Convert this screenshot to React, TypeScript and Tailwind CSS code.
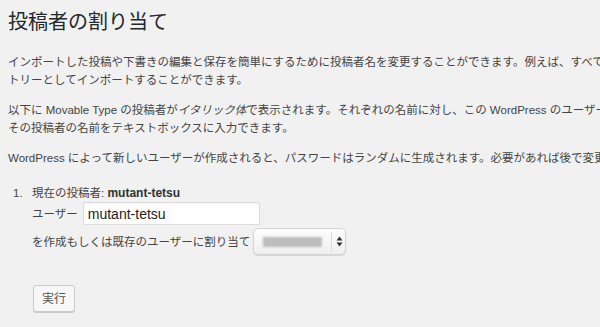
const font = { fontFamily: '"Liberation Sans", "Noto Sans CJK JP", sans-serif' };

function SelectBox() {
  return (
    <div className="relative flex h-[27px] w-[93px] items-center rounded-[5px] border border-[#d4d4d4] bg-gradient-to-b from-[#fdfdfd] to-[#efefef] shadow-[0_1px_1px_rgba(0,0,0,0.12)]">
      <div className="ml-[9px] h-[10px] w-[59px] bg-[#bdbdbd] blur-[1px]" />
      <div className="ml-[9px] h-[20px] w-px bg-[#dcdcdc]" />
      <svg className="ml-[4px]" width="7" height="11" viewBox="0 0 7 11">
        <path d="M3.5 0.5 L6.5 4.5 L0.5 4.5 Z" fill="#333" />
        <path d="M3.5 10.5 L6.5 6.5 L0.5 6.5 Z" fill="#333" />
      </svg>
    </div>
  );
}

export default function App() {
  return (
    <div
      className="h-[327px] w-[600px] overflow-hidden bg-[#f1f1f1] pl-[8px] pt-[8px] text-[#444]"
      style={font}
    >
      <h2 className="whitespace-nowrap text-[20px] font-normal leading-[28px] text-[#23282d]">
        投稿者の割り当て
      </h2>

      <div className="mt-[17px] flex flex-col gap-[12px] whitespace-nowrap text-[11.5px] leading-[18px]">
        <p>
          インポートした投稿や下書きの編集と保存を簡単にするために投稿者名を変更することができます。例えば、すべてのエントリーを admin のエン
          <br />
          トリーとしてインポートすることができます。
        </p>
        <p>
          以下に Movable Type の投稿者が<em className="italic">イタリック体</em>で表示されます。それぞれの名前に対し、この WordPress のユーザーを選択するか、
          <br />
          その投稿者の名前をテキストボックスに入力できます。
        </p>
        <p>WordPress によって新しいユーザーが作成されると、パスワードはランダムに生成されます。必要があれば後で変更してください。</p>
      </div>

      <ol className="mt-[17px] text-[11.5px] leading-[18px]">
        <li className="flex">
          <span className="w-[24px] pl-[5px]">1.</span>
          <div className="flex flex-col">
            <div className="whitespace-nowrap">
              現在の投稿者: <strong className="text-[12px] font-bold text-[#333]">mutant-tetsu</strong>
            </div>
            <label className="flex items-center gap-[5px] whitespace-nowrap">
              ユーザー
              <input
                defaultValue="mutant-tetsu"
                className="h-[23px] w-[177px] border border-[#dcdcdc] bg-white px-[4px] text-[14px] text-[#222] shadow-[inset_0_1px_2px_rgba(0,0,0,0.05)] outline-none"
                style={font}
              />
            </label>
            <label className="mt-[3px] flex items-center gap-[3px] whitespace-nowrap">
              を作成もしくは既存のユーザーに割り当て
              <SelectBox />
            </label>
          </div>
        </li>
      </ol>

      <div className="mt-[30px] pl-[25px]">
        <button
          className="h-[27px] w-[42px] rounded-[3px] border border-[#cccccc] bg-[#f7f7f7] text-[12px] text-[#555] shadow-[0_1px_0_#cccccc]"
          style={font}
        >
          実行
        </button>
      </div>
    </div>
  );
}
